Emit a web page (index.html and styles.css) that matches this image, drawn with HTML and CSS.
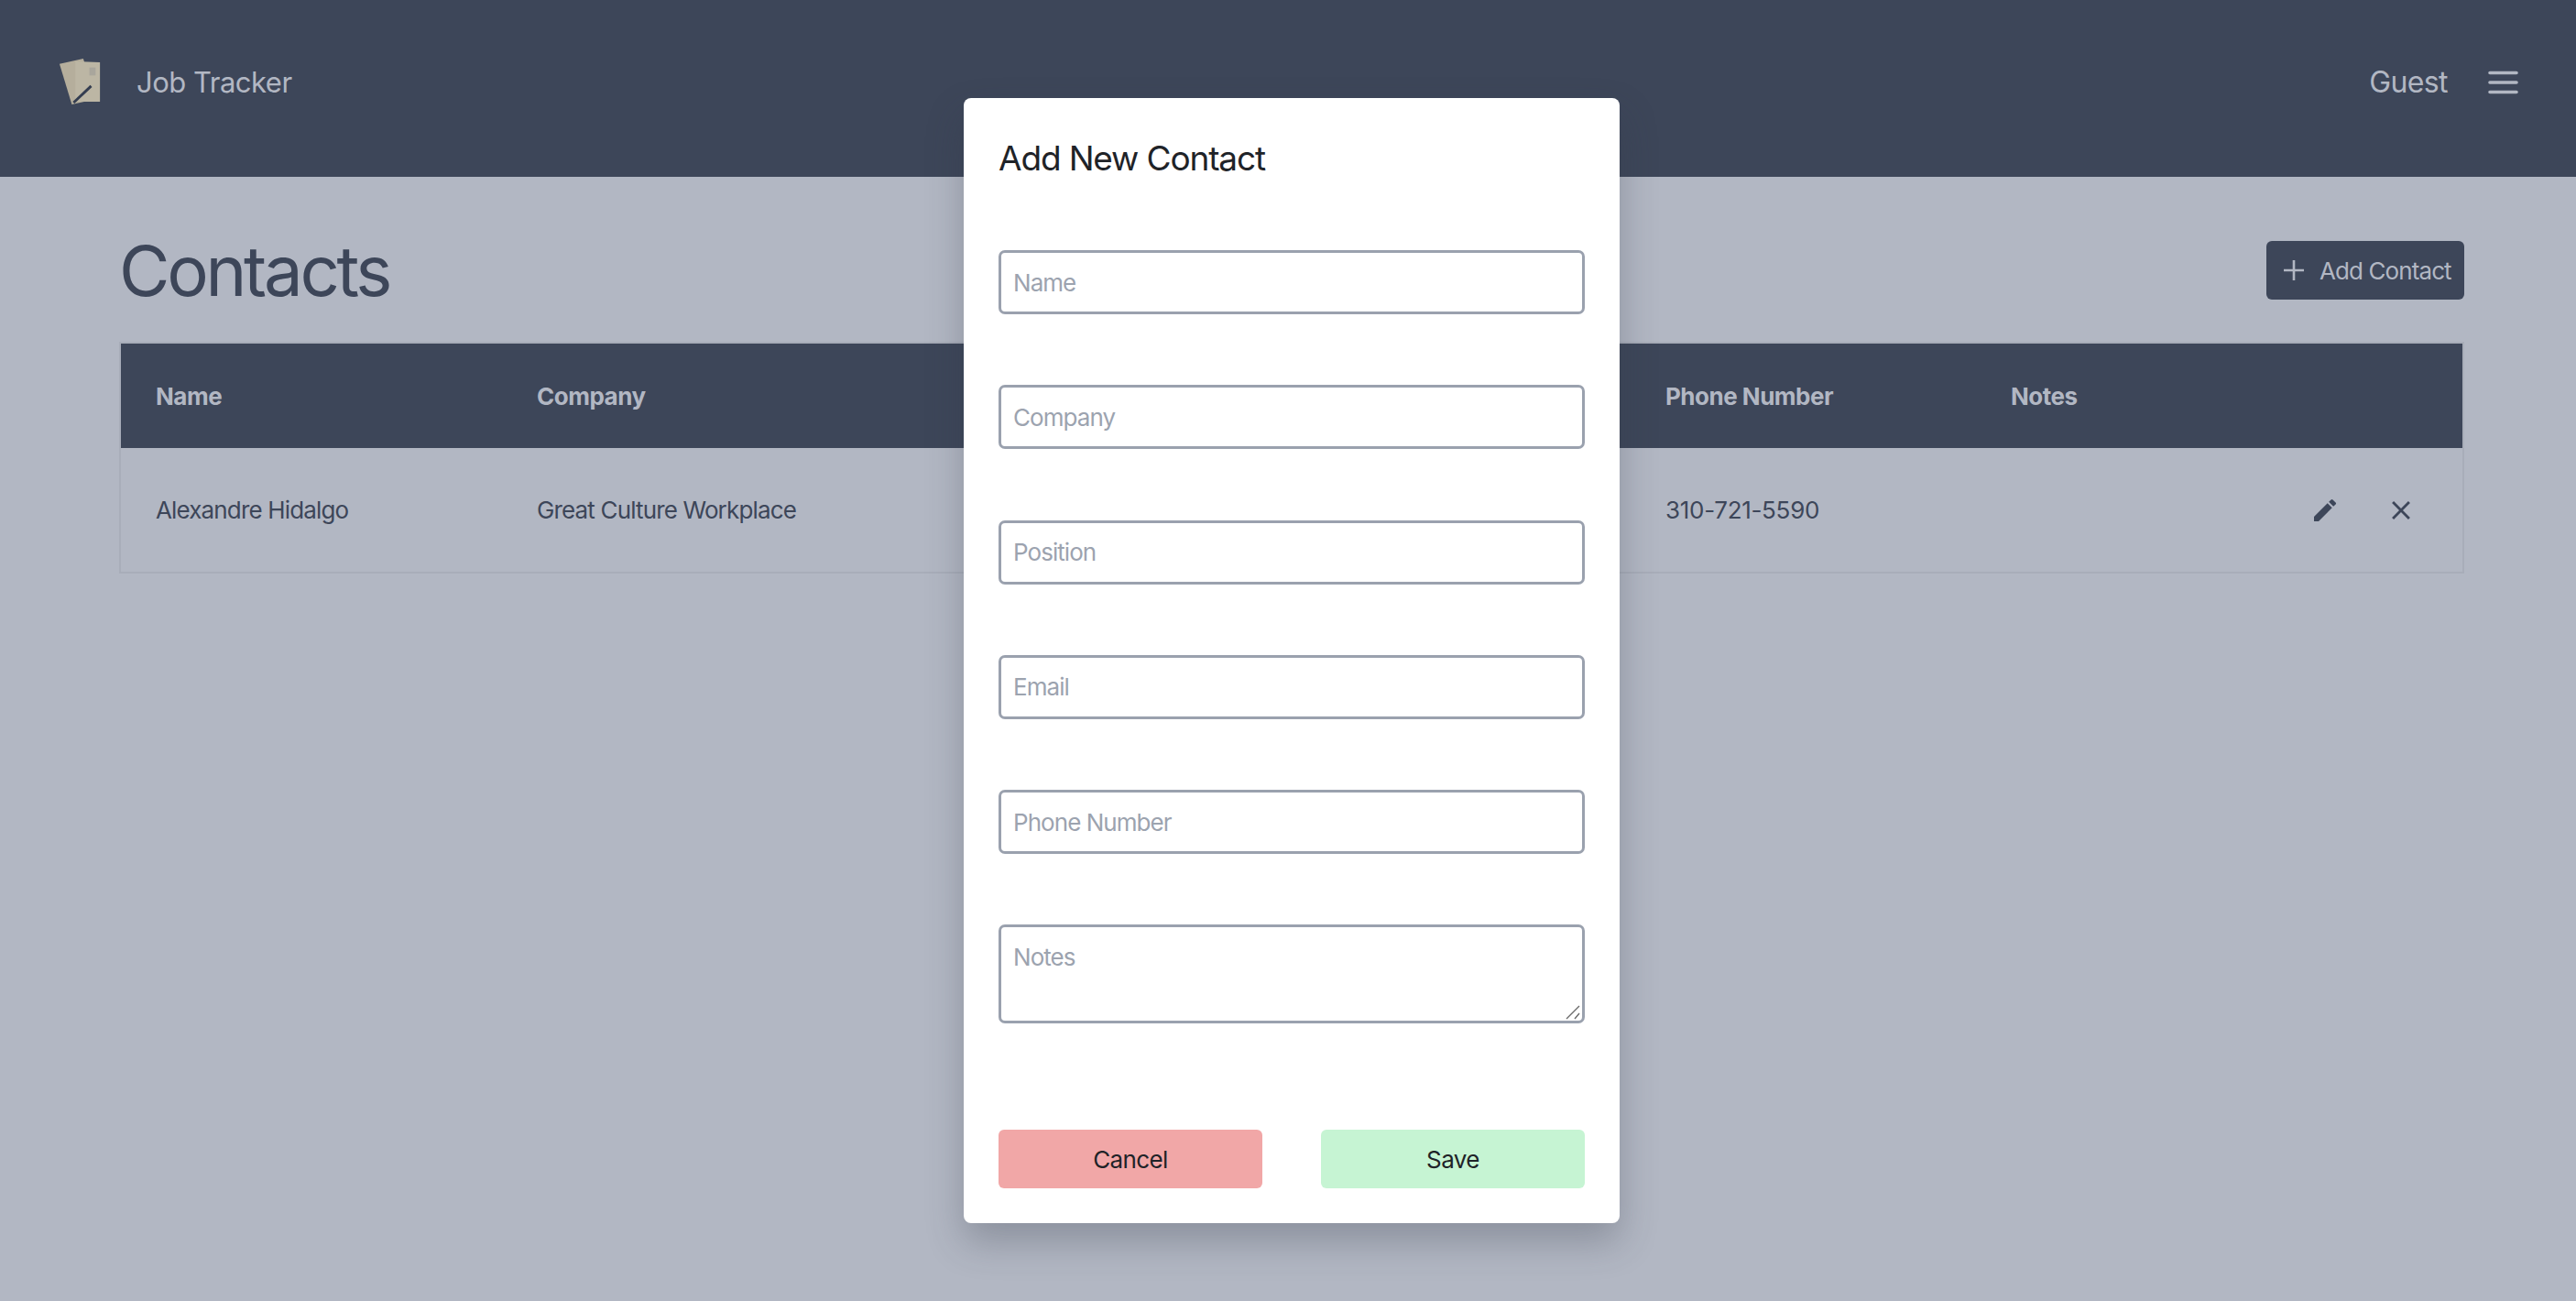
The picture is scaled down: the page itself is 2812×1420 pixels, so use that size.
FILE: index.html
```html
<!DOCTYPE html>
<html lang="en">
<head>
	<meta charset="UTF-8">
	<title>Job Tracker</title>
	<link rel="stylesheet" href="styles.css">
</head>
<body>
<header class="topbar">
	<div class="brand">
		<svg class="logo" viewBox="0 0 50 54">
			<polygon points="1,6 28,0 42,46 15,52" fill="#b5ae9c"/>
			<polygon points="19,3 47,4 47,49 19,49" fill="#bcb6a4"/>
			<rect x="35" y="10" width="7" height="9" fill="#a9a69c"/>
			<path d="M17 50 L37 31" stroke="#343d50" stroke-width="3" fill="none"/>
		</svg>
		<span class="brand-name">Job Tracker</span>
	</div>
	<div class="user">
		<span class="user-name">Guest</span>
		<svg class="menu" viewBox="0 0 33 26">
			<path d="M2 2.5H31M2 13H31M2 23.5H31" stroke="#b2b7c3" stroke-width="3.6" stroke-linecap="round" fill="none"/>
		</svg>
	</div>
</header>

<main class="page">
	<div class="title-row">
		<h1>Contacts</h1>
		<button class="add-btn">
			<svg class="plus" viewBox="0 0 24 24"><path d="M12 1V23M1 12H23" stroke="#b2b7c3" stroke-width="2.6" fill="none"/></svg>
			Add Contact
		</button>
	</div>
	<table class="contacts">
		<colgroup>
			<col class="col-name"><col class="col-company"><col class="col-position"><col class="col-email"><col class="col-phone"><col class="col-notes"><col class="col-actions">
		</colgroup>
		<thead>
			<tr>
				<th>Name</th>
				<th>Company</th>
				<th>Position</th>
				<th>Email</th>
				<th>Phone Number</th>
				<th>Notes</th>
				<th></th>
			</tr>
		</thead>
		<tbody>
			<tr>
				<td>Alexandre Hidalgo</td>
				<td>Great Culture Workplace</td>
				<td></td>
				<td></td>
				<td class="phone">310-721-5590</td>
				<td></td>
				<td>
					<div class="actions">
						<svg class="icon" viewBox="0 0 24 24"><path d="M3 17.25V21h3.75L17.81 9.94l-3.75-3.75L3 17.25zM20.71 7.04a1 1 0 0 0 0-1.41l-2.34-2.34a1 1 0 0 0-1.41 0l-1.83 1.83 3.75 3.75 1.83-1.83z"/></svg>
						<svg class="icon icon-close" viewBox="0 0 24 24"><path d="M19 6.41 17.59 5 12 10.59 6.41 5 5 6.41 10.59 12 5 17.59 6.41 19 12 13.41 17.59 19 19 17.59 13.41 12z"/></svg>
					</div>
				</td>
			</tr>
		</tbody>
	</table>
</main>

<div class="modal">
	<h2>Add New Contact</h2>
	<form class="contact-form">
		<input type="text" placeholder="Name">
		<input type="text" placeholder="Company">
		<input type="text" placeholder="Position">
		<input type="text" placeholder="Email">
		<input type="text" placeholder="Phone Number">
		<div class="notes-wrap">
			<textarea placeholder="Notes"></textarea>
			<svg class="grip" viewBox="0 0 16 16"><path d="M1 15L15 1M10 15L15 9" stroke="#6b6b6b" stroke-width="1.4" fill="none"/></svg>
		</div>
		<div class="modal-buttons">
			<button type="button" class="btn cancel">Cancel</button>
			<button type="button" class="btn save">Save</button>
		</div>
	</form>
</div>
</body>
</html>
```

FILE: styles.css
```css
*{margin: 0;padding: 0;box-sizing: border-box;}
html,body{
	height: 100%;
}
body{
	background: #b2b7c3;
	font-family: Inter, "Noto Sans", sans-serif;
	color: #3d4659;
	overflow: hidden;
	position: relative;
}
.topbar{
	height: 193px;
	background: #3d4659;
	display: flex;
	justify-content: space-between;
	align-items: center;
	padding: 0 63px 14px 64px;
	color: #b2b7c3;
}
.brand{
	display: flex;
	align-items: center;
	gap: 37px;
}
.logo{
	width: 48px;
	height: 54px;
}
.brand-name{
	font-size: 31px;
	letter-spacing: -.5px;
}
.user{
	display: flex;
	align-items: center;
	gap: 44px;
}
.user-name{
	font-size: 32px;
	letter-spacing: -.6px;
}
.menu{
	width: 33px;
	height: 26px;
}
.page{
	padding: 60px 122px 0 130px;
}
.title-row{
	display: flex;
	justify-content: space-between;
	align-items: flex-start;
	height: 120px;
}
h1{
	font-size: 76px;
	font-weight: 400;
	line-height: 84px;
	letter-spacing: -3.3px;
}
.add-btn{
	display: flex;
	align-items: center;
	gap: 16px;
	width: 216px;
	height: 64px;
	margin-top: 10px;
	padding: 0 12px 0 18px;
	border: 0;
	border-radius: 6px;
	background: #3d4659;
	color: #b2b7c3;
	font: 400 26px Inter, sans-serif;
	letter-spacing: -.9px;
	white-space: nowrap;
}
.plus{
	width: 24px;
	height: 24px;
	flex: none;
}
.contacts{
	width: 2560px;
	table-layout: fixed;
	border-collapse: separate;
	border-spacing: 0;
	border: 2px solid #a8adb9;
	font-size: 26px;
	letter-spacing: -.85px;
}
.col-name{width: 416px;}
.col-company{width: 529px;}
.col-position{width: 285px;}
.col-email{width: 418px;}
.col-phone{width: 377px;}
.col-notes{width: 300px;}
th{
	height: 114px;
	background: #3d4659;
	color: #b2b7c3;
	font-weight: 700;
	text-align: left;
	padding-left: 38px;
	letter-spacing: -.5px;
}
td{
	height: 135px;
	padding-left: 38px;
	white-space: nowrap;
}
td.phone{
	letter-spacing: -.3px;
}
.actions{
	display: flex;
	justify-content: flex-end;
	align-items: center;
	gap: 50px;
	padding-right: 50px;
}
.icon{
	width: 32px;
	height: 32px;
	fill: #3d4659;
}
.icon-close{
	width: 34px;
	height: 34px;
}
/* dialog sits over the page */
.modal{
	position: absolute;
	left: 1052px;
	top: 107px;
	width: 716px;
	height: 1228px;
	padding: 38px;
	background: #fff;
	border-radius: 8px;
	box-shadow: 0 20px 40px rgba(50,55,70,.3);
	color: #1f2328;
}
h2{
	font-size: 37px;
	font-weight: 400;
	line-height: 52px;
	letter-spacing: -1.15px;
	margin-top: 2px;
	margin-bottom: 74px;
}
.contact-form{
	display: flex;
	flex-direction: column;
}
.contact-form input,
.contact-form textarea{
	width: 640px;
	border: 3px solid #9aa1ae;
	border-radius: 7px;
	padding: 0 13px;
	font: 400 26px Inter, sans-serif;
	letter-spacing: -.95px;
	color: #1f2328;
	background: #fff;
	outline: none;
}
.contact-form input{
	height: 70px;
	margin-bottom: 77.25px;
}
.contact-form textarea{
	display: block;
	height: 108px;
	padding-top: 17px;
	resize: none;
}
.notes-wrap{
	position: relative;
	margin-bottom: 116px;
}
.grip{
	position: absolute;
	right: 5px;
	bottom: 4px;
	width: 16px;
	height: 16px;
}
::placeholder{
	color: #9ca3af;
	opacity: 1;
}
.modal-buttons{
	display: flex;
	justify-content: space-between;
}
.btn{
	width: 288px;
	height: 64px;
	border: 0;
	border-radius: 6px;
	font: 400 26px Inter, sans-serif;
	letter-spacing: -.6px;
	color: #1f2328;
}
.cancel{
	background: #f1a7a7;
}
.save{
	background: #c6f4d3;
}
```
